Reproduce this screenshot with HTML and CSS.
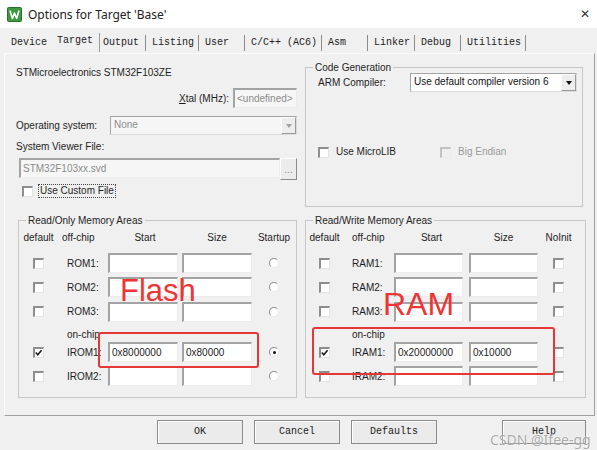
FILE: index.html
```html
<!DOCTYPE html>
<html lang="en">
<head>
    <meta charset="UTF-8">
    <meta name="viewport" content="width=device-width, initial-scale=1.0">
    <title>Options for Target 'Base'</title>
    <link rel="stylesheet" href="styles.css">
</head>
<body>
<div class="window">
    <div class="titlebar">
        <svg class="app-icon" width="15" height="15" viewBox="0 0 15 15">
            <rect x="0.5" y="0.5" width="14" height="14" rx="1" fill="#3b9a3d" stroke="#2a6f2c"/>
            <path d="M3 3.5 L5.4 11.5 L7.5 6 L9.6 11.5 L12 3.5" stroke="#fff" stroke-width="1.6" fill="none" stroke-linejoin="round"/>
        </svg>
        <span class="title">Options for Target 'Base'</span>
        <span class="close">&#x2715;</span>
    </div>

    <div class="tabs">
        <span class="tab first">Device</span>
        <span class="tab active">Target</span>
        <span class="tab tight">Output</span>
        <span class="tab">Listing</span>
        <span class="tab">User</span>
        <span class="tab">C/C++ (AC6)</span>
        <span class="tab">Asm</span>
        <span class="tab">Linker</span>
        <span class="tab">Debug</span>
        <span class="tab">Utilities</span>
    </div>

    <div class="panel">
        <div class="top">
            <div class="device">
                <div class="device-name">STMicroelectronics STM32F103ZE</div>
                <div class="xtal-row">
                    <label><u>X</u>tal (MHz):</label>
                    <span class="field xtal">&lt;undefined&gt;</span>
                </div>
                <div class="os-row">
                    <label>Operating system:</label>
                    <div class="combo off">None<span class="arrow"></span></div>
                </div>
                <div class="svd-label">System Viewer File:</div>
                <div class="svd-row">
                    <span class="field svd">STM32F103xx.svd</span>
                    <span class="browse">...</span>
                </div>
                <div class="custom-row">
                    <span class="cb"></span>
                    <span class="focus">Use Custom File</span>
                </div>
            </div>

            <fieldset class="group codegen">
                <legend>Code Generation</legend>
                <div class="arm-row">
                    <label>ARM Compiler:</label>
                    <div class="combo">Use default compiler version 6<span class="arrow"></span></div>
                </div>
                <div class="cg-checks">
                    <span class="check"><span class="cb"></span>Use MicroLIB</span>
                    <span class="check dim"><span class="cb off"></span>Big Endian</span>
                </div>
            </fieldset>
        </div>

        <div class="memory">
            <fieldset class="group mem rom">
                <legend>Read/Only Memory Areas</legend>
                <div class="mem-grid">
                    <span class="hd">default</span><span class="hd off-chip">off-chip</span><span class="hd">Start</span><span class="hd">Size</span><span class="hd">Startup</span>

                    <span class="c"><span class="cb"></span></span><span class="lbl">ROM1:</span><span class="in"></span><span class="in"></span><span class="c"><span class="radio"></span></span>
                    <span class="c"><span class="cb"></span></span><span class="lbl">ROM2:</span><span class="in"></span><span class="in"></span><span class="c"><span class="radio"></span></span>
                    <span class="c"><span class="cb"></span></span><span class="lbl">ROM3:</span><span class="in"></span><span class="in"></span><span class="c"><span class="radio"></span></span>
                    <span></span><span class="lbl chip">on-chip</span><span></span><span></span><span></span>
                    <span class="c"><span class="cb"><svg viewBox="0 0 10 10"><path d="M2 5 L4.2 7.6 L8.4 2.4" stroke="#1a1a1a" stroke-width="1.7" fill="none"/></svg></span></span><span class="lbl">IROM1:</span><span class="in">0x8000000</span><span class="in">0x80000</span><span class="c"><span class="radio on"></span></span>
                    <span class="c"><span class="cb"></span></span><span class="lbl">IROM2:</span><span class="in"></span><span class="in"></span><span class="c"><span class="radio"></span></span>
                </div>
            </fieldset>

            <fieldset class="group mem ram">
                <legend>Read/Write Memory Areas</legend>
                <div class="mem-grid">
                    <span class="hd">default</span><span class="hd off-chip">off-chip</span><span class="hd">Start</span><span class="hd">Size</span><span class="hd">NoInit</span>

                    <span class="c"><span class="cb"></span></span><span class="lbl">RAM1:</span><span class="in"></span><span class="in"></span><span class="c"><span class="cb"></span></span>
                    <span class="c"><span class="cb"></span></span><span class="lbl">RAM2:</span><span class="in"></span><span class="in"></span><span class="c"><span class="cb"></span></span>
                    <span class="c"><span class="cb"></span></span><span class="lbl">RAM3:</span><span class="in"></span><span class="in"></span><span class="c"><span class="cb"></span></span>
                    <span></span><span class="lbl chip">on-chip</span><span></span><span></span><span></span>
                    <span class="c"><span class="cb"><svg viewBox="0 0 10 10"><path d="M2 5 L4.2 7.6 L8.4 2.4" stroke="#1a1a1a" stroke-width="1.7" fill="none"/></svg></span></span><span class="lbl">IRAM1:</span><span class="in">0x20000000</span><span class="in">0x10000</span><span class="c"><span class="cb"></span></span>
                    <span class="c"><span class="cb"></span></span><span class="lbl">IRAM2:</span><span class="in"></span><span class="in"></span><span class="c"><span class="cb"></span></span>
                </div>
            </fieldset>
        </div>
    </div>

    <div class="buttons">
        <span class="btn">OK</span>
        <span class="btn">Cancel</span>
        <span class="btn">Defaults</span>
        <span class="btn help">Help</span>
    </div>

    <!-- hand-drawn markup on top of the dialog -->
    <span class="note flash">Flash</span>
    <span class="note ram-note">RAM</span>
    <span class="mark mark-rom"></span>
    <span class="mark mark-ram"></span>
    <span class="wm">CSDN @Ifee-gg</span>
</div>
</body>
</html>
```

FILE: styles.css
```css
body {
    margin: 0;
    background: #f0f0f0;
    font-family: "Liberation Sans", Arial, sans-serif;
    font-size: 10px;
    color: #1e1e1e;
}
.window {
    position: relative;
    width: 597px;
    height: 450px;
    overflow: hidden;
}

/* title bar */
.titlebar {
    height: 28px;
    background: #fff;
    display: flex;
    align-items: center;
    padding-left: 7px;
}
.app-icon {
    margin-right: 6px;
}
.title {
    flex: 1;
    font-family: "Noto Sans", sans-serif;
    font-size: 12px;
    color: #222;
}
.close {
    width: 24px;
    text-align: center;
    font-size: 12px;
    color: #333;
}

/* tab strip */
.tabs {
    height: 25px;
    display: flex;
    align-items: flex-end;
    padding-left: 5px;
}
.tab {
    font-family: "Liberation Mono", monospace;
    font-size: 10px;
    color: #222;
    min-width: 46px;
    box-sizing: border-box;
    height: 16px;
    line-height: 16px;
    padding: 0 4px 0 6px;
    margin-bottom: 2px;
    border-right: 1px solid #8a8a8a;
}
.tab.first {
    border-right: none;
}
.tab.active {
    height: 19px;
    margin-bottom: 1px;
    padding-right: 6px;
    border-right-color: #9a9a9a;
}
.tab.tight {
    padding-left: 3px;
}

/* page body */
.panel {
    margin-left: 4px;
    width: 591px;
    height: 363px;
    box-sizing: border-box;
    border: 1px solid;
    border-color: #fafafa #a0a0a0 #a0a0a0 #fafafa;
}
.top {
    display: flex;
    padding-left: 11px;
}
.device {
    width: 282px;
}
.device-name {
    margin-top: 12px;
    line-height: 14px;
}
.xtal-row {
    margin-top: 8px;
    height: 20px;
    display: flex;
    justify-content: flex-end;
    align-items: center;
    gap: 4px;
    padding-right: 1px;
}
.os-row {
    margin-top: 8px;
    height: 19px;
    display: flex;
    align-items: center;
}
.os-row label {
    width: 94px;
}
.svd-label {
    margin-top: 5px;
    line-height: 14px;
}
.svd-row {
    margin-top: 4px;
    height: 22px;
    display: flex;
    padding-left: 3px;
}
.custom-row {
    margin-top: 4px;
    height: 14px;
    display: flex;
    align-items: center;
    padding-left: 6px;
    gap: 5px;
}
.focus {
    border: 1px dotted #444;
    padding: 0 1px;
    line-height: 12px;
}

/* sunken edit boxes */
.field,
.in {
    box-sizing: border-box;
    height: 20px;
    line-height: 17px;
    padding-left: 2px;
    background: #fff;
    border-style: solid;
    border-width: 2px 1px 1px 2px;
    border-color: #a3a3a3 #ececec #ececec #a3a3a3;
    white-space: nowrap;
    overflow: hidden;
}
.xtal {
    width: 64px;
    color: #8c8c8c;
    background: #f6f6f6;
}
.svd {
    width: 261px;
    color: #8c8c8c;
    background: #f6f6f6;
}
.browse {
    width: 17px;
    height: 22px;
    box-sizing: border-box;
    border: 1px solid;
    border-color: #fff #8a8a8a #8a8a8a #fff;
    background: #ececec;
    color: #888;
    text-align: center;
    line-height: 22px;
}

/* drop-down lists */
.combo {
    position: relative;
    box-sizing: border-box;
    height: 19px;
    line-height: 16px;
    padding-left: 3px;
    background: #fff;
    border: 1px solid;
    border-color: #a3a3a3 #dcdcdc #dcdcdc #a3a3a3;
    display: flex;
    justify-content: space-between;
    color: #111;
}
.combo.off {
    width: 187px;
    color: #8c8c8c;
    background: #f6f6f6;
}
.arrow {
    width: 15px;
    box-sizing: border-box;
    border: 1px solid;
    border-color: #fff #9a9a9a #9a9a9a #fff;
    background: #ededed;
    display: flex;
    align-items: center;
    justify-content: center;
}
.arrow::after {
    content: "";
    border-left: 3.5px solid transparent;
    border-right: 3.5px solid transparent;
    border-top: 4px solid #111;
}
.combo.off .arrow::after {
    border-top-color: #a0a0a0;
}

/* group boxes */
.group {
    margin: 0;
    padding: 0;
    min-width: 0;
    box-sizing: border-box;
    border: 1px solid #c7c7c7;
}
.group legend {
    margin-left: 7px;
    padding: 0 2px;
    line-height: 13px;
}
.codegen {
    margin: 7px 0 0 7px;
    width: 278px;
    height: 146px;
}
.arm-row {
    display: flex;
    align-items: center;
    margin: -1px 0 0 12px;
}
.arm-row label {
    width: 92px;
}
.arm-row .combo {
    width: 167px;
}
.cg-checks {
    display: flex;
    margin: 53px 0 0 12px;
}
.check {
    width: 122px;
    display: flex;
    align-items: center;
    gap: 7px;
    line-height: 14px;
}
.check.dim {
    color: #9a9a9a;
}

/* check boxes and radio buttons */
.cb {
    width: 11px;
    height: 11px;
    box-sizing: border-box;
    background: #fff;
    border-style: solid;
    border-width: 2px 1px 1px 2px;
    border-color: #8e8e8e #e4e4e4 #e4e4e4 #8e8e8e;
    display: flex;
}
.cb svg {
    width: 9px;
    height: 9px;
    margin: -1px 0 0 -1px;
}
.cb.off {
    background: #f0f0f0;
    border-color: #c2c2c2 #ececec #ececec #c2c2c2;
}
.radio {
    width: 10px;
    height: 10px;
    box-sizing: border-box;
    border-radius: 50%;
    background: #fff;
    border: 1px solid;
    border-color: #8e8e8e #eaeaea #eaeaea #8e8e8e;
    display: flex;
    align-items: center;
    justify-content: center;
}
.radio.on::after {
    content: "";
    width: 3px;
    height: 3px;
    border-radius: 50%;
    background: #111;
}

/* memory areas */
.memory {
    display: flex;
    margin-top: 7px;
    padding-left: 13px;
}
.mem {
    height: 184px;
}
.rom {
    width: 279px;
}
.ram {
    width: 281px;
    margin-left: 8px;
}
.mem-grid {
    display: grid;
    grid-template-rows: 20px 24px 24px 25px 16px 24px 24px;
    margin-top: 4px;
}
.rom .mem-grid {
    grid-template-columns: 39px 50px 74px 70px 44px;
}
.ram .mem-grid {
    grid-template-columns: 37px 51px 75px 69px 41px;
}
.hd {
    line-height: 14px;
    text-align: center;
}
.hd.off-chip {
    text-align: left;
}
.rom .off-chip {
    padding-left: 4px;
}
.ram .off-chip {
    padding-left: 9px;
}
.c {
    display: flex;
    align-items: center;
    justify-content: center;
}
.lbl {
    display: flex;
    align-items: center;
    padding-left: 9px;
}
.lbl.chip {
    align-items: flex-end;
}
.in {
    align-self: center;
    width: 70px;
    color: #222;
}
.ram .in {
    width: 69px;
}

/* dialog buttons */
.buttons {
    display: flex;
    margin-top: 4px;
    padding-left: 157px;
}
.btn {
    width: 88px;
    height: 24px;
    box-sizing: border-box;
    margin-right: 11px;
    border: 1px solid #8c8c8c;
    box-shadow: inset 1px 1px 0 #fff;
    background: #ebebeb;
    font-family: "Liberation Mono", monospace;
    font-size: 10px;
    line-height: 22px;
    text-align: center;
    color: #222;
}
.btn.help {
    margin-left: 54px;
    width: 86px;
}

/* red markings */
.note {
    position: absolute;
    color: #ee3535;
    font-family: "Liberation Sans", Arial, sans-serif;
    line-height: 1;
}
.flash {
    left: 120px;
    top: 275px;
    font-size: 31px;
}
.ram-note {
    left: 383px;
    top: 288px;
    font-size: 32px;
}
.mark {
    position: absolute;
    box-sizing: border-box;
    border: 2px solid #e63636;
    border-radius: 3px;
}
.mark-rom {
    left: 98px;
    top: 332px;
    width: 161px;
    height: 36px;
}
.mark-ram {
    left: 312px;
    top: 327px;
    width: 243px;
    height: 48px;
}
.wm {
    position: absolute;
    left: 490px;
    top: 430px;
    font-family: "Noto Sans", sans-serif;
    font-size: 14px;
    color: rgba(120, 120, 120, 0.6);
    text-shadow: 0 0 2px #fff;
    white-space: nowrap;
}
```
